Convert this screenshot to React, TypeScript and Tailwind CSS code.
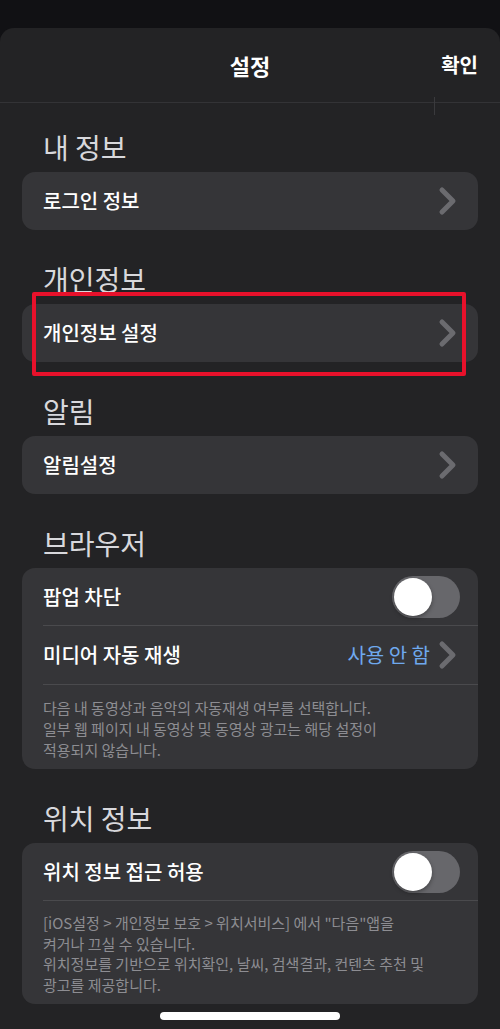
import React from "react";

const FONT = '"Noto Sans CJK KR", "Noto Sans", sans-serif';

function Chevron() {
  return (
    <svg width="20" height="30" viewBox="0 0 20 30" className="shrink-0">
      <path d="M4 4 L15 15 L4 26" fill="none" stroke="#6b6b6f" strokeWidth="5" strokeLinecap="round" strokeLinejoin="round" />
    </svg>
  );
}

function Toggle() {
  return (
    <div className="w-[68px] h-[42px] rounded-full bg-[#67676b] p-[2px] flex items-center shrink-0">
      <div className="w-[38px] h-[38px] rounded-full bg-white shadow-[0_2px_4px_rgba(0,0,0,0.35)]" />
    </div>
  );
}

function SectionHeader({ children }: { children: React.ReactNode }) {
  return (
    <div className="h-[34px] flex items-center pl-[43px] text-[28px] leading-[34px] text-[#d8d8dc] mt-[32px] mb-[8px]">
      {children}
    </div>
  );
}

function NavCard({ label }: { label: string }) {
  return (
    <div className="mx-[22px] h-[58px] rounded-[13px] bg-[#353538] flex items-center justify-between pl-[21px] pr-[20px]">
      <span className="text-[20px] font-medium text-white">{label}</span>
      <Chevron />
    </div>
  );
}

export default function App() {
  return (
    <div className="w-[500px] h-[1029px] bg-[#111114] flex flex-col overflow-hidden" style={{ fontFamily: FONT }}>
      <div className="h-[28px] shrink-0" />
      <div className="flex-1 rounded-t-[14px] bg-[#232325] flex flex-col relative">
        {/* Header */}
        <div className="h-[75px] relative flex items-center justify-center border-b border-[#333336]">
          <span className="text-[22px] font-bold text-white">설정</span>
          <span className="absolute right-[22px] text-[20px] font-semibold text-white">확인</span>
          <div className="absolute left-[434px] top-[69px] w-px h-[18px] bg-[#3a3a3d]" />
        </div>

        <div className="mt-[-5px]">
          <SectionHeader>내 정보</SectionHeader>
        </div>
        <NavCard label="로그인 정보" />

        <SectionHeader>개인정보</SectionHeader>
        <div className="relative">
          <NavCard label="개인정보 설정" />
          <div className="absolute left-[32px] top-[-12px] w-[434px] h-[84px] border-[4px] border-[#e8112b] rounded-[2px]" />
        </div>

        <SectionHeader>알림</SectionHeader>
        <NavCard label="알림설정" />

        <SectionHeader>브라우저</SectionHeader>
        <div className="mx-[22px] rounded-[13px] bg-[#353538] flex flex-col">
          <div className="h-[57px] flex items-center justify-between pl-[21px] pr-[18px]">
            <span className="text-[20px] font-medium text-white">팝업 차단</span>
            <Toggle />
          </div>
          <div className="ml-[21px] h-px bg-[#4a4a4d]" />
          <div className="h-[58px] flex items-center justify-between pl-[21px] pr-[20px]">
            <span className="text-[20px] font-medium text-white">미디어 자동 재생</span>
            <div className="flex items-center gap-[8px]">
              <span className="text-[20px] text-[#6fa9ee]">사용 안 함</span>
              <Chevron />
            </div>
          </div>
          <div className="ml-[21px] h-px bg-[#4a4a4d]" />
          <div className="pl-[21px] pr-[12px] pt-[12px] pb-[9px] text-[15px] leading-[21px] text-[#8d8d92]">
            다음 내 동영상과 음악의 자동재생 여부를 선택합니다.
            <br />
            일부 웹 페이지 내 동영상 및 동영상 광고는 해당 설정이
            <br />
            적용되지 않습니다.
          </div>
        </div>

        <SectionHeader>위치 정보</SectionHeader>
        <div className="mx-[22px] rounded-[13px] bg-[#353538] flex flex-col">
          <div className="h-[57px] flex items-center justify-between pl-[21px] pr-[18px]">
            <span className="text-[20px] font-medium text-white">위치 정보 접근 허용</span>
            <Toggle />
          </div>
          <div className="ml-[21px] h-px bg-[#4a4a4d]" />
          <div className="pl-[21px] pr-[12px] pt-[12px] pb-[9px] text-[15px] leading-[20.5px] text-[#8d8d92]">
            [iOS설정 &gt; 개인정보 보호 &gt; 위치서비스] 에서 "다음"앱을
            <br />
            켜거나 끄실 수 있습니다.
            <br />
            위치정보를 기반으로 위치확인, 날씨, 검색결과, 컨텐츠 추천 및
            <br />
            광고를 제공합니다.
          </div>
        </div>

        <div className="flex justify-center mt-[8px]">
          <div className="w-[180px] h-[8px] rounded-full bg-white" />
        </div>
      </div>
    </div>
  );
}
